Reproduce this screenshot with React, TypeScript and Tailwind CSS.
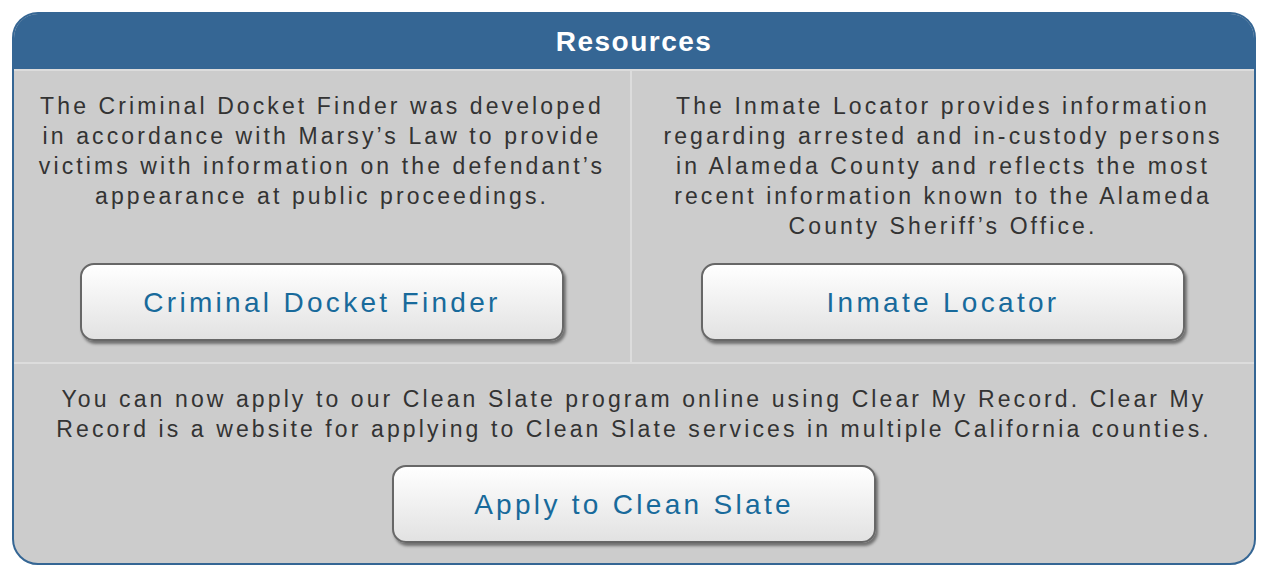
import React from 'react';

function ResourceButton({ label }: { label: string }) {
  return (
    <a
      href="#"
      className="flex h-[78px] w-[484px] items-center justify-center rounded-[14px] border-2 border-[#676767] bg-gradient-to-b from-white to-[#e2e2e2] pt-[2px] text-[28px] tracking-[3.3px] text-[#186a9b] shadow-[2px_3px_3px_rgba(0,0,0,0.45)]"
    >
      {label}
    </a>
  );
}

export default function App() {
  return (
    <div className="min-h-[586px] bg-white p-3 font-['Liberation_Sans',Arial,sans-serif]">
      <div className="w-[1244px] overflow-hidden rounded-[26px] border-2 border-[#356694] bg-[#cccccc]">
        {/* Header */}
        <div className="flex h-[57px] items-center justify-center border-b-2 border-[#dcdcdc] bg-[#356694]">
          <h2 className="text-[28px] font-bold tracking-[1.5px] text-white">Resources</h2>
        </div>

        {/* Two columns */}
        <div className="flex border-b-2 border-[#dcdcdc]">
          <div className="flex w-[618px] flex-col items-center border-r-2 border-[#dcdcdc] pt-5 pb-[21px]">
            <p className="text-center text-[23px] leading-[30px] tracking-[3.1px] text-[#333333]">
              The Criminal Docket Finder was developed
              <br />
              in accordance with Marsy’s Law to provide
              <br />
              victims with information on the defendant’s
              <br />
              appearance at public proceedings.
            </p>
            <div className="mt-auto pt-[22px]">
              <ResourceButton label="Criminal Docket Finder" />
            </div>
          </div>
          <div className="flex flex-1 flex-col items-center pt-5 pb-[21px]">
            <p className="text-center text-[23px] leading-[30px] tracking-[3.1px] text-[#333333]">
              The Inmate Locator provides information
              <br />
              regarding arrested and in-custody persons
              <br />
              in Alameda County and reflects the most
              <br />
              recent information known to the Alameda
              <br />
              County Sheriff’s Office.
            </p>
            <div className="mt-auto pt-[22px]">
              <ResourceButton label="Inmate Locator" />
            </div>
          </div>
        </div>

        {/* Bottom */}
        <div className="flex flex-col items-center pt-5 pb-5">
          <p className="text-center text-[23px] leading-[30px] tracking-[3.1px] text-[#333333]">
            You can now apply to our Clean Slate program online using Clear My Record. Clear My
            <br />
            Record is a website for applying to Clean Slate services in multiple California counties.
          </p>
          <div className="pt-[21px]">
            <ResourceButton label="Apply to Clean Slate" />
          </div>
        </div>
      </div>
    </div>
  );
}
